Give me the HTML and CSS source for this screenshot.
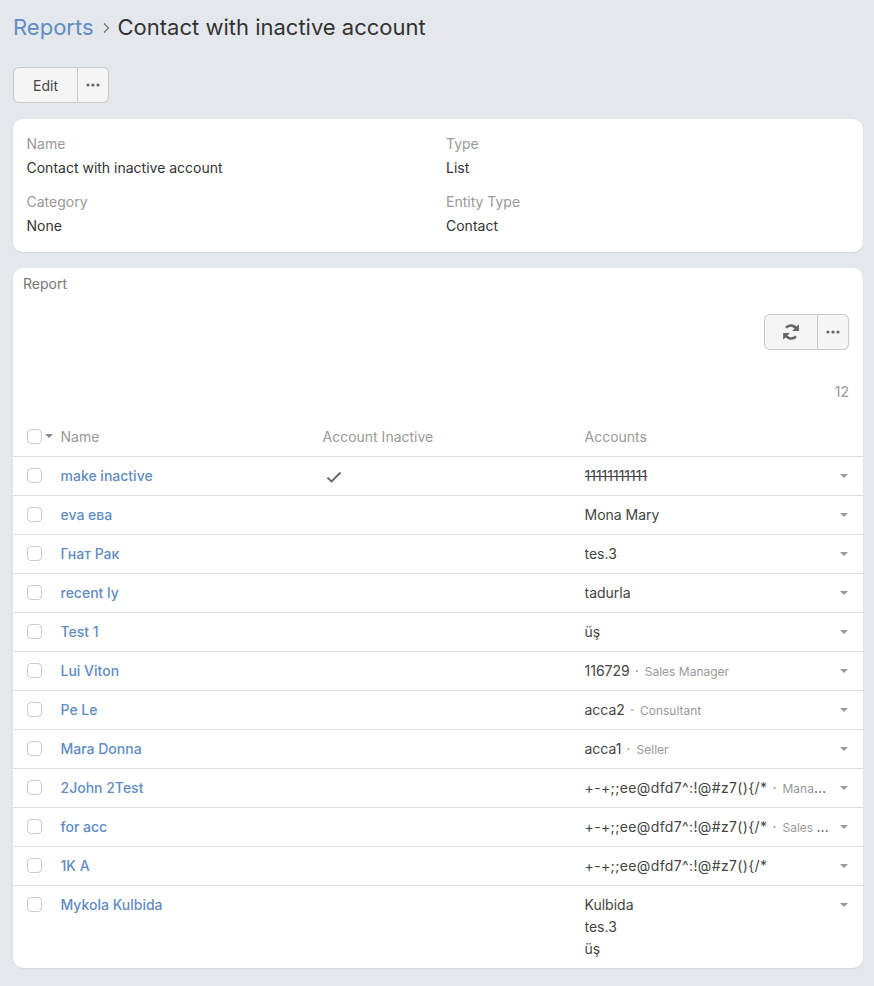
FILE: index.html
```html
<!DOCTYPE html>
<html>
<head>
	<meta charset="utf-8">
	<title>Contact with inactive account</title>
	<link rel="stylesheet" href="styles.css">
</head>
<body>
	<svg class="sprites" width="0" height="0">
		<symbol id="dots" viewBox="0 0 14 4"><circle cx="2" cy="2" r="1.6"/><circle cx="7" cy="2" r="1.6"/><circle cx="12" cy="2" r="1.6"/></symbol>
	</svg>

	<h1 class="title"><a href="#">Reports</a><span class="sep"><svg width="7" height="12" viewBox="0 0 7 12"><path d="M1 1.5 5.5 6 1 10.5" fill="none" stroke="#777" stroke-width="1.3"/></svg></span><span>Contact with inactive account</span></h1>

	<div class="btn-group top-actions">
		<button class="btn btn-edit">Edit</button>
		<button class="btn btn-more"><svg class="dots"><use href="#dots"/></svg></button>
	</div>

	<div class="card details">
		<div class="field">
			<div class="label">Name</div>
			<div class="value">Contact with inactive account</div>
		</div>
		<div class="field">
			<div class="label">Type</div>
			<div class="value">List</div>
		</div>
		<div class="field">
			<div class="label">Category</div>
			<div class="value">None</div>
		</div>
		<div class="field">
			<div class="label">Entity Type</div>
			<div class="value">Contact</div>
		</div>
	</div>

	<div class="card report">
		<div class="report-title">Report</div>
		<div class="report-actions">
			<div class="btn-group">
				<button class="btn btn-refresh"><svg width="18" height="18" viewBox="0 0 16 16"><path d="M13.4 6.8A5.7 5.7 0 0 0 3.6 4.1" fill="none" stroke="#666" stroke-width="2.2"/><path d="M15 1.2v6H9z" fill="#666"/><path d="M2.6 9.2a5.7 5.7 0 0 0 9.8 2.7" fill="none" stroke="#666" stroke-width="2.2"/><path d="M1 14.8v-6h6z" fill="#666"/></svg></button>
				<button class="btn btn-more"><svg class="dots"><use href="#dots"/></svg></button>
			</div>
		</div>
		<div class="total">12</div>

		<div class="row head">
			<div class="check-cell"><span class="check"></span><span class="caret small"></span></div>
			<div>Name</div>
			<div>Account Inactive</div>
			<div>Accounts</div>
		</div>

		<div class="row">
			<div class="check-cell"><span class="check"></span></div>
			<a href="#">make inactive</a>
			<div><svg class="tick" width="16" height="12" viewBox="0 0 16 12"><path d="M1.5 6.5 5.5 10.5 14.5 1.5" fill="none" stroke="#666" stroke-width="1.8"/></svg></div>
			<div class="accounts"><div class="line"><s>11111111111</s></div></div>
			<span class="caret"></span>
		</div>
		<div class="row">
			<div class="check-cell"><span class="check"></span></div>
			<a href="#">eva ева</a>
			<div></div>
			<div class="accounts"><div class="line">Mona Mary</div></div>
			<span class="caret"></span>
		</div>
		<div class="row">
			<div class="check-cell"><span class="check"></span></div>
			<a href="#">Гнат Рак</a>
			<div></div>
			<div class="accounts"><div class="line">tes.3</div></div>
			<span class="caret"></span>
		</div>
		<div class="row">
			<div class="check-cell"><span class="check"></span></div>
			<a href="#">recent ly</a>
			<div></div>
			<div class="accounts"><div class="line">tadurla</div></div>
			<span class="caret"></span>
		</div>
		<div class="row">
			<div class="check-cell"><span class="check"></span></div>
			<a href="#">Test 1</a>
			<div></div>
			<div class="accounts"><div class="line">üş</div></div>
			<span class="caret"></span>
		</div>
		<div class="row">
			<div class="check-cell"><span class="check"></span></div>
			<a href="#">Lui Viton</a>
			<div></div>
			<div class="accounts"><div class="line">116729<span class="dot">·</span><small>Sales Manager</small></div></div>
			<span class="caret"></span>
		</div>
		<div class="row">
			<div class="check-cell"><span class="check"></span></div>
			<a href="#">Pe Le</a>
			<div></div>
			<div class="accounts"><div class="line">acca2<span class="dot">·</span><small>Consultant</small></div></div>
			<span class="caret"></span>
		</div>
		<div class="row">
			<div class="check-cell"><span class="check"></span></div>
			<a href="#">Mara Donna</a>
			<div></div>
			<div class="accounts"><div class="line">acca1<span class="dot">·</span><small>Seller</small></div></div>
			<span class="caret"></span>
		</div>
		<div class="row">
			<div class="check-cell"><span class="check"></span></div>
			<a href="#">2John 2Test</a>
			<div></div>
			<div class="accounts"><div class="line"><span class="symbols">+-+;;ee@dfd7^:!@#z7(){/*</span><span class="dot">·</span><small>Manager</small></div></div>
			<span class="caret"></span>
		</div>
		<div class="row">
			<div class="check-cell"><span class="check"></span></div>
			<a href="#">for acc</a>
			<div></div>
			<div class="accounts"><div class="line"><span class="symbols">+-+;;ee@dfd7^:!@#z7(){/*</span><span class="dot">·</span><small>Sales Manager</small></div></div>
			<span class="caret"></span>
		</div>
		<div class="row">
			<div class="check-cell"><span class="check"></span></div>
			<a href="#">1K A</a>
			<div></div>
			<div class="accounts"><div class="line"><span class="symbols">+-+;;ee@dfd7^:!@#z7(){/*</span></div></div>
			<span class="caret"></span>
		</div>
		<div class="row last">
			<div class="check-cell"><span class="check"></span></div>
			<a href="#">Mykola Kulbida</a>
			<div></div>
			<div class="accounts">
				<div class="line">Kulbida</div>
				<div class="line">tes.3</div>
				<div class="line">üş</div>
			</div>
			<span class="caret"></span>
		</div>
	</div>
</body>
</html>
```

FILE: styles.css
```css
html {
	box-sizing: border-box;
}
*, *:before, *:after {
	box-sizing: inherit;
}
body {
	margin: 0;
	padding: 0 11px 18px 13px;
	background: #e4e7eb;
	color: #333;
	font-family: Inter, "Liberation Sans", sans-serif;
	font-size: 14px;
	line-height: 20px;
}
a {
	color: #5f8cc4;
	text-decoration: none;
	font-weight: 500;
}
.sprites {
	position: absolute;
}

.title {
	display: flex;
	align-items: flex-start;
	margin: 0;
	padding-top: 12px;
	height: 67px;
	font-size: 22px;
	line-height: 30px;
	font-weight: 400;
}
.title a {
	font-weight: 400;
}
.sep {
	display: flex;
	align-items: center;
	height: 30px;
	padding: 2px 8px 0 9px;
}

.btn-group {
	display: inline-flex;
}
.btn {
	height: 36px;
	margin: 0;
	padding: 0;
	background: #f5f5f5;
	border: 1px solid #c8c8c8;
	color: #444;
	font-family: inherit;
	font-size: 14px;
	font-weight: 400;
	display: flex;
	align-items: center;
	justify-content: center;
}
.btn:first-child {
	border-radius: 6px 0 0 6px;
}
.btn:last-child {
	border-left: 0;
	border-radius: 0 6px 6px 0;
}
.btn-edit {
	width: 65px;
}
.btn-more {
	width: 31px;
}
.btn-refresh {
	width: 54px;
}
.dots {
	width: 14px;
	height: 4px;
	fill: #666;
}
.top-actions {
	display: flex;
	margin-bottom: 16px;
}

.card {
	background: #fff;
	border-radius: 10px;
	box-shadow: 0 1px 2px rgba(0, 0, 0, 0.08);
}
.details {
	display: grid;
	grid-template-columns: 419.5px 1fr;
	grid-auto-rows: 44px;
	row-gap: 14px;
	height: 133px;
	padding: 15px 14px 0 13.5px;
	margin-bottom: 16px;
}
.label {
	color: #999;
	margin-bottom: 4px;
}

.report-title {
	padding: 6px 10px 0;
	color: #777;
}
.report-actions {
	display: flex;
	justify-content: flex-end;
	padding: 20px 14px 0;
}
.total {
	padding: 32px 14px 0;
	text-align: right;
	color: #999;
}

.row {
	position: relative;
	display: grid;
	grid-template-columns: 33.5px 262px 262px 1fr;
	align-items: start;
	height: 39px;
	padding: 9px 14px 0;
	border-top: 1px solid #ddd;
}
.row.head {
	height: 39px;
	margin-top: 15px;
	padding-top: 10px;
	border-top: 0;
	color: #999;
}
.row.last {
	height: 83px;
}
.check-cell {
	display: flex;
	align-items: center;
	height: 18px;
}
.check {
	display: block;
	width: 15px;
	height: 15px;
	border: 1px solid #ccc;
	border-radius: 4px;
	background: #fff;
}
.caret {
	position: absolute;
	top: 17px;
	right: 15px;
	border: 4px solid transparent;
	border-top-color: #999;
	border-bottom: 0;
}
.caret.small {
	position: static;
	margin-left: 3px;
	border-top-color: #888;
}
.tick {
	display: block;
	margin: 5px 0 0 3px;
}
.accounts {
	min-width: 0;
	padding-right: 20px;
}
.line {
	overflow: hidden;
	white-space: nowrap;
	text-overflow: ellipsis;
	line-height: 22px;
	margin-top: -1px;
	color: #444;
}
.line + .line {
	margin-top: 0;
}
.symbols {
	letter-spacing: 0.37px;
}
.dot {
	margin: 0 6px 0 5px;
	color: #888;
}
small {
	font-size: 12px;
	color: #999;
}
```
